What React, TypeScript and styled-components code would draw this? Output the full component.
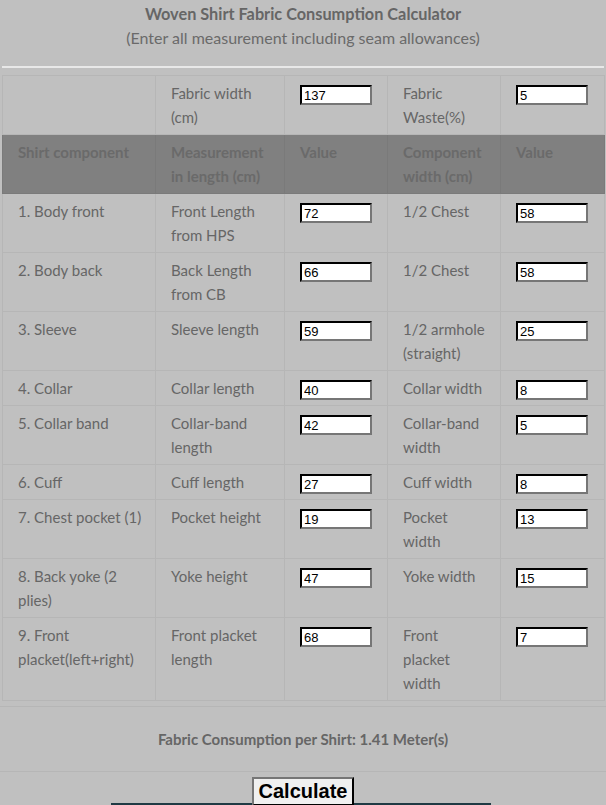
import React from "react";
import styled, { createGlobalStyle } from "styled-components";

const Global = createGlobalStyle`
  html, body { margin: 0; padding: 0; background: #c0c0c0; }
  body { font-family: Lato, "Open Sans", sans-serif; color: #666666; overflow: hidden; }
`;

const Page = styled.div`
  width: 606px;
  height: 805px;
  overflow: hidden;
  background: #c0c0c0;
`;

const Head = styled.header`
  padding-top: 2px;
  text-align: center;
  line-height: 24px;
`;

const Title = styled.div`
  font-size: 16.3px;
  font-weight: 700;
  color: #666666;
`;

const Sub = styled.div`
  font-size: 16px;
  color: #6a6a6a;
`;

const Rule = styled.div`
  margin: 16px 2px 7px 2px;
  height: 2px;
  background: #e8e8e8;
`;

const Table = styled.table`
  margin-left: 2px;
  width: 602px;
  border-collapse: collapse;
  table-layout: fixed;
  border: 1px solid #b6b6b6;
  font-size: 15px;
  line-height: 24px;
`;

const HeadRow = styled.tr`
  background: #808080;
`;

const Th = styled.th`
  text-align: left;
  vertical-align: top;
  font-weight: 700;
  color: #6a6a6a;
  padding: 5px 8px 5px 15px;
  border: 1px solid #7a7a7a;
`;

const Td = styled.td<{ $narrow?: boolean }>`
  vertical-align: top;
  color: #666666;
  padding: 5px ${(p) => (p.$narrow ? "13px" : "8px")} 5px 15px;
  border: 1px solid #b6b6b6;
`;

const Input = styled.input`
  display: block;
  box-sizing: border-box;
  width: 72px;
  height: 20px;
  margin-top: 4px;
  padding: 1px 2px;
  border: 2px inset #767676;
  border-color: #222 #767676 #767676 #222;
  background: #ffffff;
  font-family: Arial, "Liberation Sans", sans-serif;
  font-size: 13px;
  color: #000;
  outline: none;
`;

const Result = styled.div`
  margin-top: 5px;
  height: 64px;
  border-top: 1px solid #b6b6b6;
  border-bottom: 1px solid #b6b6b6;
  display: flex;
  align-items: center;
  justify-content: center;
  font-size: 15px;
  font-weight: 700;
  color: #666666;
`;

const ButtonRow = styled.div`
  height: 26px;
  margin-top: 5px;
  text-align: center;
`;

const Button = styled.button`
  font-family: Arial, "Liberation Sans", sans-serif;
  font-weight: 700;
  font-size: 20px;
  line-height: 23px;
  padding: 1px 5px;
  color: #000;
  background: #f0f0f0;
  border: 2px outset #767676;
  border-color: #767676 #333 #333 #767676;
`;

const DarkBar = styled.div`
  margin-left: 111px;
  width: 380px;
  height: 3px;
  background: #1f3a44;
`;

type Row = { name: string; m: string; v1: string; w: string; v2: string };

const rows: Row[] = [
  { name: "1. Body front", m: "Front Length from HPS", v1: "72", w: "1/2 Chest", v2: "58" },
  { name: "2. Body back", m: "Back Length from CB", v1: "66", w: "1/2 Chest", v2: "58" },
  { name: "3. Sleeve", m: "Sleeve length", v1: "59", w: "1/2 armhole (straight)", v2: "25" },
  { name: "4. Collar", m: "Collar length", v1: "40", w: "Collar width", v2: "8" },
  { name: "5. Collar band", m: "Collar-band length", v1: "42", w: "Collar-band width", v2: "5" },
  { name: "6. Cuff", m: "Cuff length", v1: "27", w: "Cuff width", v2: "8" },
  { name: "7. Chest pocket (1)", m: "Pocket height", v1: "19", w: "Pocket width", v2: "13" },
  { name: "8. Back yoke (2 plies)", m: "Yoke height", v1: "47", w: "Yoke width", v2: "15" },
  { name: "9. Front placket(left+right)", m: "Front placket length", v1: "68", w: "Front placket width", v2: "7" },
];

export default function App() {
  return (
    <Page>
      <Global />
      <Head>
        <Title>Woven Shirt Fabric Consumption Calculator</Title>
        <Sub>(Enter all measurement including seam allowances)</Sub>
      </Head>
      <Rule />
      <Table>
        <colgroup>
          <col style={{ width: 153 }} />
          <col style={{ width: 129 }} />
          <col style={{ width: 103 }} />
          <col style={{ width: 113 }} />
          <col style={{ width: 104 }} />
        </colgroup>
        <tbody>
          <tr>
            <Td></Td>
            <Td>Fabric width (cm)</Td>
            <Td><Input defaultValue="137" /></Td>
            <Td $narrow>Fabric Waste(%)</Td>
            <Td><Input defaultValue="5" /></Td>
          </tr>
          <HeadRow>
            <Th>Shirt component</Th>
            <Th>Measurement in length (cm)</Th>
            <Th>Value</Th>
            <Th>Component width (cm)</Th>
            <Th>Value</Th>
          </HeadRow>
          {rows.map((r) => (
            <tr key={r.name}>
              <Td>{r.name}</Td>
              <Td>{r.m}</Td>
              <Td><Input defaultValue={r.v1} /></Td>
              <Td $narrow>{r.w}</Td>
              <Td><Input defaultValue={r.v2} /></Td>
            </tr>
          ))}
        </tbody>
      </Table>
      <Result>Fabric Consumption per Shirt: 1.41 Meter(s)</Result>
      <ButtonRow>
        <Button>Calculate</Button>
      </ButtonRow>
      <DarkBar />
    </Page>
  );
}
